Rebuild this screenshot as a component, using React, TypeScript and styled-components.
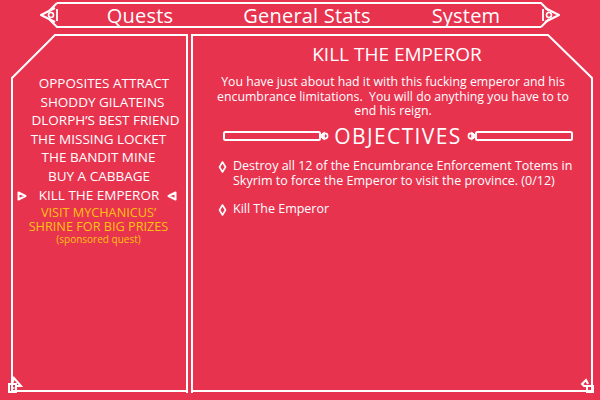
import React from "react";
import styled, { createGlobalStyle } from "styled-components";

const FONT = `"Comic Sans MS", "Open Sans", sans-serif`;
const BG = "#e8334f";
const GOLD = "#ffc20e";

const Global = createGlobalStyle`
  html, body { margin: 0; padding: 0; background: ${BG}; }
  body { font-family: ${FONT}; color: #fff; }
  * { box-sizing: border-box; }
`;

const Page = styled.div`
  width: 600px;
  height: 400px;
  background: ${BG};
  display: flex;
  flex-direction: column;
  overflow: hidden;
  position: relative;
`;

const TabBar = styled.nav`
  position: relative;
  height: 34px;
  display: grid;
  grid-template-columns: 166px 168px 1fr;
  padding: 0 59px 0 57px;
`;

const Tab = styled.div`
  position: relative;
  height: 30px;
  display: flex;
  align-items: center;
  justify-content: center;
  font-size: 20px;
  letter-spacing: 0.2px;
`;

const Decor = styled.svg`
  position: absolute;
  left: 0;
  top: 0;
  overflow: visible;
  pointer-events: none;
`;

const Main = styled.main`
  display: grid;
  grid-template-columns: 177px 400px;
  column-gap: 3px;
  margin-left: 11px;
  height: 359px;
`;

const LeftPanel = styled.section`
  position: relative;
  border-right: 2px solid #fff;
  display: flex;
  flex-direction: column;
  align-items: center;
  padding-top: 40px;
`;

const RightPanel = styled.section`
  position: relative;
  border-left: 2px solid #fff;
  display: flex;
  flex-direction: column;
  padding: 9px 6px 0 16px;
`;

const QuestItem = styled.div<{ $shift: number }>`
  position: relative;
  width: 100%;
  text-align: center;
  font-size: 13.5px;
  line-height: 18.6px;
  text-transform: uppercase;
  white-space: nowrap;
  padding-left: ${(p) => p.$shift}px;
`;

const Marker = styled.svg<{ $side: "left" | "right" }>`
  position: absolute;
  top: 5px;
  ${(p) => (p.$side === "left" ? "left: 6px;" : "right: 9px;")}
`;

const Sponsored = styled.div`
  margin-top: 1px;
  text-align: center;
  color: ${GOLD};
  font-size: 12.7px;
  line-height: 14px;
  text-transform: uppercase;
`;

const SponsoredNote = styled.div`
  font-size: 10px;
  line-height: 13px;
  text-transform: none;
`;

const Title = styled.h1`
  margin: 0;
  font-weight: normal;
  text-align: center;
  font-size: 19px;
  line-height: 22px;
`;

const Description = styled.p`
  margin: 10px 0 0;
  text-align: center;
  font-size: 12.3px;
  line-height: 14.7px;
  padding: 0 12px 0 4px;
`;

const ObjectivesHeader = styled.div`
  margin-top: 5px;
  height: 24px;
  display: flex;
  align-items: center;
  justify-content: center;
  gap: 5px;
  padding-left: 2px;
`;

const ObjectivesLabel = styled.h2`
  margin: 0;
  font-weight: normal;
  font-size: 21px;
  line-height: 24px;
  letter-spacing: 1.4px;
`;

const ObjectiveList = styled.ul`
  list-style: none;
  margin: 11px 0 0 9px;
  padding: 0;
  display: flex;
  flex-direction: column;
  gap: 13.5px;
`;

const Objective = styled.li`
  display: grid;
  grid-template-columns: 15px 1fr;
  font-size: 12.5px;
  line-height: 14.5px;
`;

const Bullet = styled.svg`
  margin-top: 2px;
`;

function TabDecor() {
  return (
    <Decor width="600" height="34" fill="none" stroke="#fff" strokeWidth="2" strokeLinejoin="round">
      <path d="M57 3 H541 L549 11 M541 27 H57 L49 19 M57 3 L49 11 M541 27 L549 19" />
      <path d="M55 8 L41 15 L55 22" strokeWidth="2" />
      <circle cx="51" cy="15" r="2.5" strokeWidth="1.6" />
      <path d="M57 9 V21" strokeWidth="1.8" />
      <path d="M545 8 L559 15 L545 22" strokeWidth="2" />
      <circle cx="549" cy="15" r="2.5" strokeWidth="1.6" />
      <path d="M543 9 V21" strokeWidth="1.8" />
    </Decor>
  );
}

function LeftFrame() {
  return (
    <Decor width="177" height="359" fill="none" stroke="#fff" strokeWidth="2">
      <path d="M177 1 H44 L1 44 V357 H177" />
      <path d="M-2 350 H5 V358 H-2 Z" strokeWidth="2" />
      <path d="M1 350 L3 344 L10 352 H5" strokeWidth="2" />
      <path d="M1.5 354 H3.5" strokeWidth="1.5" />
    </Decor>
  );
}

function RightFrame() {
  return (
    <Decor width="400" height="359" fill="none" stroke="#fff" strokeWidth="2">
      <path d="M0 1 H355 L399 44 V357 H0" />
      <path d="M394 352 H400 V358 H394 Z" strokeWidth="2" />
      <path d="M394 352 L391 352 L389 350 L393 346 L395 350" strokeWidth="2" />
    </Decor>
  );
}

function SwordBar({ flip }: { flip?: boolean }) {
  return (
    <svg width="106" height="12" viewBox="0 0 106 12" fill="none" stroke="#fff" strokeWidth="2"
      style={flip ? { transform: "scaleX(-1)" } : undefined}>
      <rect x="1" y="2" width="96" height="8" rx="1.5" />
      <path d="M97 6 L101 3 V9 Z" strokeWidth="1.6" />
      <circle cx="102" cy="6" r="2.6" strokeWidth="1.6" />
    </svg>
  );
}

function Tri({ side }: { side: "left" | "right" }) {
  const d = side === "left" ? "M1.5 1.5 L8.5 5 L1.5 8.5 Z" : "M8.5 1.5 L1.5 5 L8.5 8.5 Z";
  return (
    <Marker $side={side} width="10" height="10" viewBox="0 0 10 10" fill="none" stroke="#fff" strokeWidth="2" strokeLinejoin="round">
      <path d={d} />
    </Marker>
  );
}

function Diamond() {
  return (
    <Bullet width="9" height="12" viewBox="0 0 9 12" fill="none" stroke="#fff" strokeWidth="1.6">
      <path d="M4.5 1 L7.5 6 L4.5 11 L1.5 6 Z" strokeLinejoin="round" />
    </Bullet>
  );
}

const quests: { name: string; shift: number; selected?: boolean }[] = [
  { name: "Opposites Attract", shift: 11 },
  { name: "Shoddy Gilateins", shift: 8 },
  { name: "Dlorph’s Best Friend", shift: 14 },
  { name: "The Missing Locket", shift: 0 },
  { name: "The Bandit Mine", shift: 0 },
  { name: "Buy a Cabbage", shift: 1 },
  { name: "Kill the Emperor", shift: 1, selected: true },
];

export default function App() {
  return (
    <Page>
      <Global />
      <TabBar>
        <TabDecor />
        <Tab>Quests</Tab>
        <Tab>General Stats</Tab>
        <Tab>System</Tab>
      </TabBar>
      <Main>
        <LeftPanel>
          <LeftFrame />
          {quests.map((q) => (
            <QuestItem key={q.name} $shift={q.shift}>
              {q.selected && <Tri side="left" />}
              {q.name}
              {q.selected && <Tri side="right" />}
            </QuestItem>
          ))}
          <Sponsored>
            Visit Mychanicus’
            <br />
            Shrine for Big Prizes
            <SponsoredNote>(sponsored quest)</SponsoredNote>
          </Sponsored>
        </LeftPanel>
        <RightPanel>
          <RightFrame />
          <Title>KILL THE EMPEROR</Title>
          <Description>
            You have just about had it with this fucking emperor and his encumbrance limitations.&nbsp; You will do
            anything you have to to end his reign.
          </Description>
          <ObjectivesHeader>
            <SwordBar />
            <ObjectivesLabel>OBJECTIVES</ObjectivesLabel>
            <SwordBar flip />
          </ObjectivesHeader>
          <ObjectiveList>
            <Objective>
              <Diamond />
              <span>
                Destroy all 12 of the Encumbrance Enforcement Totems in Skyrim to force the Emperor to visit the
                province. (0/12)
              </span>
            </Objective>
            <Objective>
              <Diamond />
              <span>Kill The Emperor</span>
            </Objective>
          </ObjectiveList>
        </RightPanel>
      </Main>
    </Page>
  );
}
